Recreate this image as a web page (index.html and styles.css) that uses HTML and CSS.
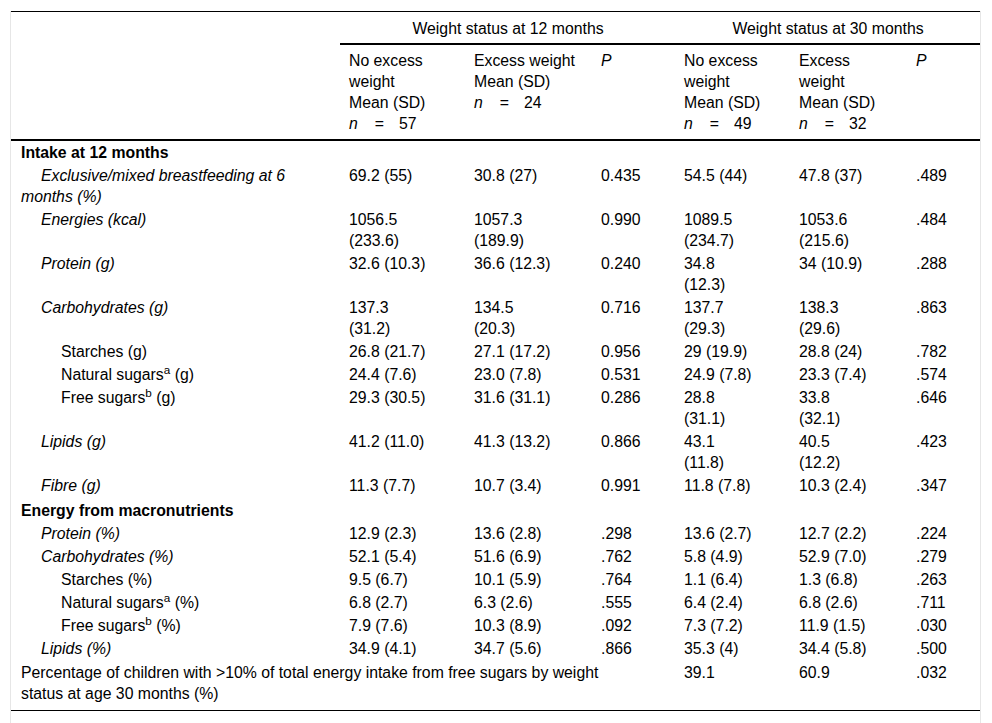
FILE: index.html
```html
<!DOCTYPE html>
<html lang="en">
<head>
<meta charset="utf-8">
<title>Intake by weight status</title>
<link rel="stylesheet" href="styles.css">
</head>
<body>
<div class="frame">
<table class="data">
  <colgroup>
    <col class="c0"><col class="c1"><col class="c2"><col class="c3"><col class="c4"><col class="c5"><col class="c6">
  </colgroup>
  <thead>
    <tr class="group-row">
      <th class="blank" rowspan="2"></th>
      <th class="group" colspan="3">Weight status at 12 months</th>
      <th class="group" colspan="3">Weight status at 30 months</th>
    </tr>
    <tr class="sub-row">
      <th>No excess<br>weight<br>Mean (SD)<br><i>n</i><span class="eq">=</span>57</th>
      <th>Excess weight<br>Mean (SD)<br><i>n</i><span class="eq">=</span>24</th>
      <th><i>P</i></th>
      <th>No excess<br>weight<br>Mean (SD)<br><i>n</i><span class="eq">=</span>49</th>
      <th>Excess<br>weight<br>Mean (SD)<br><i>n</i><span class="eq">=</span>32</th>
      <th><i>P</i></th>
    </tr>
  </thead>
  <tbody>
    <tr class="section">
      <td class="label"><b>Intake at 12 months</b></td><td></td><td></td><td></td><td></td><td></td><td></td>
    </tr>
    <tr>
      <td class="label lvl1 wrap"><i>Exclusive/mixed breastfeeding at 6<br>months (%)</i></td>
      <td>69.2 (55)</td><td>30.8 (27)</td><td>0.435</td><td>54.5 (44)</td><td>47.8 (37)</td><td>.489</td>
    </tr>
    <tr>
      <td class="label lvl1"><i>Energies (kcal)</i></td>
      <td>1056.5<br>(233.6)</td><td>1057.3<br>(189.9)</td><td>0.990</td><td>1089.5<br>(234.7)</td><td>1053.6<br>(215.6)</td><td>.484</td>
    </tr>
    <tr>
      <td class="label lvl1"><i>Protein (g)</i></td>
      <td>32.6 (10.3)</td><td>36.6 (12.3)</td><td>0.240</td><td>34.8<br>(12.3)</td><td>34 (10.9)</td><td>.288</td>
    </tr>
    <tr>
      <td class="label lvl1"><i>Carbohydrates (g)</i></td>
      <td>137.3<br>(31.2)</td><td>134.5<br>(20.3)</td><td>0.716</td><td>137.7<br>(29.3)</td><td>138.3<br>(29.6)</td><td>.863</td>
    </tr>
    <tr>
      <td class="label lvl2">Starches (g)</td>
      <td>26.8 (21.7)</td><td>27.1 (17.2)</td><td>0.956</td><td>29 (19.9)</td><td>28.8 (24)</td><td>.782</td>
    </tr>
    <tr>
      <td class="label lvl2">Natural sugars<sup>a</sup> (g)</td>
      <td>24.4 (7.6)</td><td>23.0 (7.8)</td><td>0.531</td><td>24.9 (7.8)</td><td>23.3 (7.4)</td><td>.574</td>
    </tr>
    <tr>
      <td class="label lvl2">Free sugars<sup>b</sup> (g)</td>
      <td>29.3 (30.5)</td><td>31.6 (31.1)</td><td>0.286</td><td>28.8<br>(31.1)</td><td>33.8<br>(32.1)</td><td>.646</td>
    </tr>
    <tr>
      <td class="label lvl1"><i>Lipids (g)</i></td>
      <td>41.2 (11.0)</td><td>41.3 (13.2)</td><td>0.866</td><td>43.1<br>(11.8)</td><td>40.5<br>(12.2)</td><td>.423</td>
    </tr>
    <tr>
      <td class="label lvl1"><i>Fibre (g)</i></td>
      <td>11.3 (7.7)</td><td>10.7 (3.4)</td><td>0.991</td><td>11.8 (7.8)</td><td>10.3 (2.4)</td><td>.347</td>
    </tr>
    <tr class="section spaced">
      <td class="label"><b>Energy from macronutrients</b></td><td></td><td></td><td></td><td></td><td></td><td></td>
    </tr>
    <tr>
      <td class="label lvl1"><i>Protein (%)</i></td>
      <td>12.9 (2.3)</td><td>13.6 (2.8)</td><td>.298</td><td>13.6 (2.7)</td><td>12.7 (2.2)</td><td>.224</td>
    </tr>
    <tr>
      <td class="label lvl1"><i>Carbohydrates (%)</i></td>
      <td>52.1 (5.4)</td><td>51.6 (6.9)</td><td>.762</td><td>5.8 (4.9)</td><td>52.9 (7.0)</td><td>.279</td>
    </tr>
    <tr>
      <td class="label lvl2">Starches (%)</td>
      <td>9.5 (6.7)</td><td>10.1 (5.9)</td><td>.764</td><td>1.1 (6.4)</td><td>1.3 (6.8)</td><td>.263</td>
    </tr>
    <tr>
      <td class="label lvl2">Natural sugars<sup>a</sup> (%)</td>
      <td>6.8 (2.7)</td><td>6.3 (2.6)</td><td>.555</td><td>6.4 (2.4)</td><td>6.8 (2.6)</td><td>.711</td>
    </tr>
    <tr>
      <td class="label lvl2">Free sugars<sup>b</sup> (%)</td>
      <td>7.9 (7.6)</td><td>10.3 (8.9)</td><td>.092</td><td>7.3 (7.2)</td><td>11.9 (1.5)</td><td>.030</td>
    </tr>
    <tr>
      <td class="label lvl1"><i>Lipids (%)</i></td>
      <td>34.9 (4.1)</td><td>34.7 (5.6)</td><td>.866</td><td>35.3 (4)</td><td>34.4 (5.8)</td><td>.500</td>
    </tr>
    <tr class="final">
      <td class="label" colspan="4">Percentage of children with &gt;10% of total energy intake from free sugars by weight<br>status at age 30 months (%)</td>
      <td>39.1</td><td>60.9</td><td>.032</td>
    </tr>
  </tbody>
</table>
</div>
</body>
</html>
```

FILE: styles.css
```css
html, body {
  margin: 0;
  padding: 0;
  background: #ffffff;
}

body {
  font-family: "Liberation Sans", Arial, Helvetica, sans-serif;
  font-size: 15.8px;
  color: #000000;
}

.frame {
  box-sizing: border-box;
  margin: 11px 0 0 10px;
  width: 971px;
  height: 712px;
  border-left: 1px solid #e6e6e6;
  border-right: 1px solid #e6e6e6;
}

.data {
  width: 969px;
  table-layout: fixed;
  border-collapse: collapse;
  border-top: 1px solid #000;
  border-bottom: 1px solid #000;
  line-height: 21px;
}

.c0 { width: 329px; }
.c1 { width: 125px; }
.c2 { width: 127px; }
.c3 { width: 83px; }
.c4 { width: 115px; }
.c5 { width: 117px; }
.c6 { width: 73px; }

.data th,
.data td {
  text-align: left;
  vertical-align: top;
  font-weight: normal;
  white-space: nowrap;
}

.data td {
  padding: 1px 8px 1px 9px;
}

.group-row th {
  padding: 6px 8px 4px 9px;
}

.group-row th.group {
  text-align: center;
  border-bottom: 2px solid #000;
}

.sub-row th {
  padding: 5px 8px 5px 9px;
  border-bottom: 2px solid #000;
}

.group-row th.blank {
  border-bottom: 2px solid #000;
}

.eq {
  display: inline-block;
  margin: 0 15px 0 17px;
}

.data td.label {
  padding-left: 10px;
}

.data td.lvl1 {
  padding-left: 30px;
}

.data td.lvl1.wrap {
  padding-left: 10px;
  text-indent: 20px;
}

.data td.lvl2 {
  padding-left: 50px;
}

.data b {
  font-weight: bold;
}

sup {
  font-size: 0.74em;
  line-height: 0;
  vertical-align: 0.5em;
}

.section.spaced td {
  padding-top: 3px;
}

.final td {
  padding-top: 2px;
  padding-bottom: 6px;
}
```
